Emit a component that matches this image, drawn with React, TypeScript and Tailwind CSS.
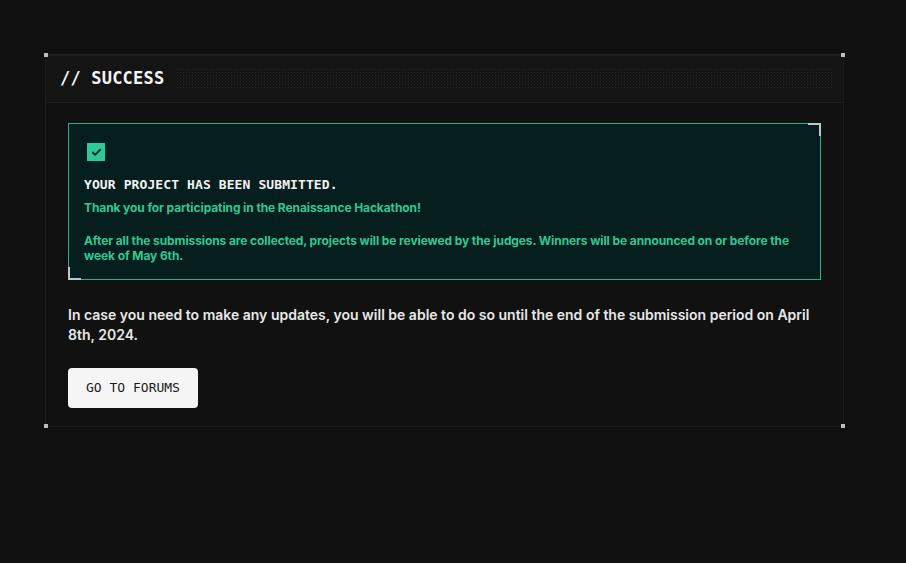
import { Check } from 'lucide-react'

const mono = "font-['DejaVu_Sans_Mono','Liberation_Mono',monospace]"
const sans = "font-['Inter','Noto_Sans',sans-serif]"

// small light square sitting on each corner of the panel frame
const CornerDot = ({ className }: { className: string }) => (
  <span className={`absolute h-[4px] w-[4px] bg-[#bdbdbd] ${className}`} />
)

const SubmittedNotice = () => (
  <div className="relative border border-[#2fae82] bg-[#071e1e] px-[15px] pt-[19px] pb-[16px]">
    {/* bracket marks on two corners */}
    <span className="absolute -top-px -right-px h-[13px] w-[13px] border-t-2 border-r-2 border-[#b9c9c3]" />
    <span className="absolute -bottom-px -left-px h-[13px] w-[13px] border-b-2 border-l-2 border-[#b9c9c3]" />

    <div className="ml-[3px] flex h-[18px] w-[18px] items-center justify-center bg-[#2ec99a]">
      <Check size={11} strokeWidth={4} className="text-[#0b2a22]" />
    </div>
    <p className={`${mono} mt-[15px] text-[13px] leading-[18px] font-bold tracking-[0.1px] text-[#f2f2f2]`}>
      YOUR PROJECT HAS BEEN SUBMITTED.
    </p>
    <div className={`${sans} mt-[6px] text-[12px] leading-[15px] font-bold tracking-[-0.1px] text-[#2fc892]`}>
      <p>Thank you for participating in the Renaissance Hackathon!</p>
      <p className="mt-[18px]">
        After all the submissions are collected, projects will be reviewed by the judges. Winners
        will be announced on or before the week of May 6th.
      </p>
    </div>
  </div>
)

export default function App() {
  return (
    <div className="min-h-[563px] w-full bg-[#101010] pt-[54px] pl-[45px]">
      <div className="relative w-[799px] border-x border-b border-[#1d1d1d] bg-[#111111]">
        <CornerDot className="-top-px -left-[2px]" />
        <CornerDot className="-top-px -right-[2px]" />
        <CornerDot className="-bottom-[2px] -left-[2px]" />
        <CornerDot className="-bottom-[2px] -right-[2px]" />

        <div className="flex h-[49px] items-center gap-3 border-t-2 border-b border-[#1e1e1e] bg-[#141414] pr-[11px] pl-[14px]">
          <h2 className={`${mono} text-[17px] font-bold tracking-[0.2px] text-[#f4f4f4]`}>
            // SUCCESS
          </h2>
          <div className="h-[22px] flex-1 bg-[radial-gradient(#2a2a2a_1px,transparent_1px)] bg-[length:3px_3px]" />
        </div>

        <div className="px-[22px] pt-[20px] pb-[18px]">
          <SubmittedNotice />

          <p className={`${sans} mt-[25px] text-[14px] leading-[20px] font-semibold text-[#e8e8e8]`}>
            In case you need to make any updates, you will be able to do so until the end of the
            submission period on April 8th, 2024.
          </p>

          <button
            className={`${mono} mt-[23px] flex h-[40px] w-[130px] items-center justify-center rounded-[4px] bg-[#f5f5f5] text-[13px] text-[#1a1a1a]`}
          >
            GO TO FORUMS
          </button>
        </div>
      </div>
    </div>
  )
}
